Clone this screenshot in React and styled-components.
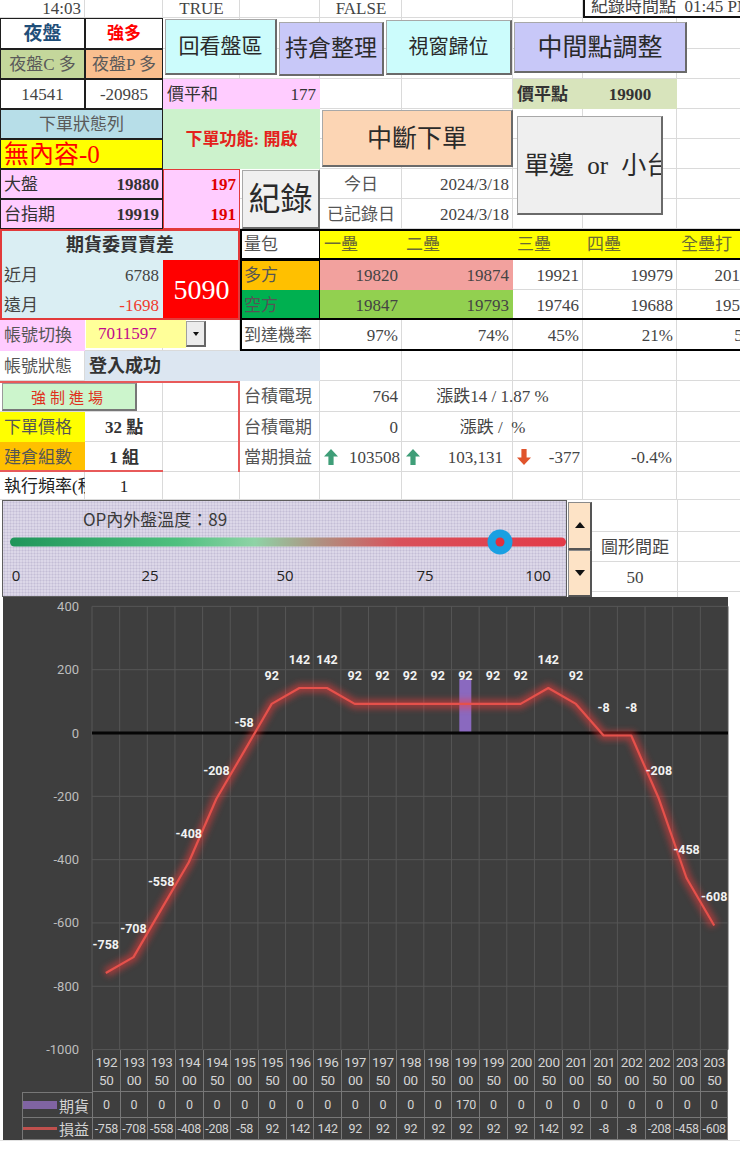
import React from 'react';
import styled, { createGlobalStyle } from 'styled-components';

// spreadsheet geometry (px)
const COLS = [85, 78, 77, 80, 82, 111, 70, 94, 84];
const ROWS = [18, 31, 30, 30, 30, 30, 30, 30, 31, 30, 30, 31, 30, 31, 30, 30, 28];

const edges = arr => arr.reduce((acc, w) => [...acc, acc[acc.length - 1] + w], [0]).slice(1);

const gridLines = (cols, rows, color) => {
  const imgs = [];
  const pos = [];
  const sizes = [];
  edges(cols).forEach(x => {
    imgs.push(`linear-gradient(${color}, ${color})`);
    pos.push(`${x - 1}px 0`);
    sizes.push('1px 100%');
  });
  edges(rows).forEach(y => {
    imgs.push(`linear-gradient(${color}, ${color})`);
    pos.push(`0 ${y - 1}px`);
    sizes.push('100% 1px');
  });
  return `
    background-image: ${imgs.join(', ')};
    background-position: ${pos.join(', ')};
    background-size: ${sizes.join(', ')};
    background-repeat: no-repeat;
  `;
};

const GlobalStyle = createGlobalStyle`
  html, body { margin: 0; padding: 0; background: #fff; }
  body {
    width: 740px;
    overflow: hidden;
    font-family: "Liberation Serif", "Noto Sans CJK TC", serif;
  }
`;

const Page = styled.div`
  width: 740px;
  overflow: hidden;
`;

const Sheet = styled.div`
  display: grid;
  grid-template-columns: ${COLS.map(c => c + 'px').join(' ')};
  grid-template-rows: ${ROWS.map(r => r + 'px').join(' ')};
  width: ${COLS.reduce((a, b) => a + b, 0)}px;
  ${gridLines(COLS, ROWS, '#dadada')}
`;

const justify = { left: 'flex-start', center: 'center', right: 'flex-end', between: 'space-between' };

const Cell = styled.div`
  grid-column: ${p => p.$c};
  grid-row: ${p => p.$r};
  display: flex;
  align-items: ${p => (p.$v === 'end' ? 'flex-end' : 'center')};
  justify-content: ${p => justify[p.$a || 'left']};
  padding: ${p => (p.$v === 'end' ? '0 4px 1px' : `0 ${p.$pr ?? 4}px 0 4px`)};
  line-height: 1;
  background: ${p => p.$bg || 'transparent'};
  color: ${p => p.$fg || '#333'};
  font-size: ${p => p.$size || 17}px;
  font-weight: ${p => (p.$bold ? 700 : 400)};
  white-space: pre;
  overflow: hidden;
  box-shadow: ${p => (p.$line ? 'inset 0 0 0 1px #1e1e1e' : 'none')};
`;

const Frame = styled.div`
  grid-column: ${p => p.$c};
  grid-row: ${p => p.$r};
  border-style: solid;
  border-color: ${p => p.$color || '#000'};
  border-width: ${p => p.$w || '2px'};
  pointer-events: none;
  z-index: 2;
`;

const StampBox = styled.div`
  grid-column: 8 / 10;
  grid-row: 1;
  display: flex;
  align-items: flex-end;
  padding: 0 0 1px 6px;
  background: #fff;
  border-left: 2px solid #111;
  border-bottom: 2px solid #111;
  color: #444;
  font-size: 17px;
  line-height: 1;
  white-space: pre;
  overflow: hidden;
  z-index: 2;
`;

const ButtonBar = styled.div`
  grid-column: 3 / 10;
  grid-row: 2 / 4;
  display: flex;
  align-items: flex-start;
  gap: 2px;
  padding-left: 2px;
  z-index: 2;
`;

const SheetButton = styled.div`
  grid-column: ${p => p.$c || 'auto'};
  grid-row: ${p => p.$r || 'auto'};
  box-sizing: border-box;
  width: ${p => (p.$w ? p.$w + 'px' : 'auto')};
  height: ${p => (p.$h ? p.$h + 'px' : 'auto')};
  margin: ${p => p.$m || '0'};
  align-self: start;
  display: flex;
  align-items: center;
  justify-content: ${p => (p.$left ? 'flex-start' : 'center')};
  padding-left: ${p => (p.$left ? '6px' : '0')};
  background: ${p => p.$bg};
  color: #2a2a2a;
  font-size: ${p => p.$size || 22}px;
  line-height: 1;
  word-spacing: ${p => (p.$left ? '7px' : 'normal')};
  white-space: nowrap;
  overflow: hidden;
  border: 1px solid #a8a8a8;
  border-right: 2px solid #6a6a6a;
  border-bottom: 2px solid #6a6a6a;
  z-index: 2;
`;

const ForceButton = styled.div`
  grid-column: 1 / 3;
  grid-row: 14;
  box-sizing: border-box;
  width: 135px;
  height: 28px;
  margin: 2px 0 0 2px;
  display: flex;
  align-items: center;
  justify-content: center;
  background: #ccf5cc;
  border: 1px solid #9a9a9a;
  border-right: 2px solid #777;
  border-bottom: 2px solid #777;
  color: #e0301c;
  font-size: 15px;
  letter-spacing: 4px;
`;

const Combo = styled.div`
  grid-column: 2 / 4;
  grid-row: 12;
  align-self: start;
  width: 120px;
  height: 28px;
  margin-left: 1px;
  display: flex;
  z-index: 2;
`;

const ComboField = styled.div`
  flex: 1;
  display: flex;
  align-items: center;
  padding-left: 12px;
  background: #ffff99;
  color: #c0088c;
  font-size: 17px;
`;

const ComboDrop = styled.div`
  width: 17px;
  margin: 1px 0;
  display: flex;
  align-items: center;
  justify-content: center;
  background: #ececec;
  border: 1px solid #a0a0a0;
  border-right: 2px solid #666;
  border-bottom: 2px solid #666;
  &::after {
    content: '';
    border-left: 3.5px solid transparent;
    border-right: 3.5px solid transparent;
    border-top: 4px solid #111;
  }
`;

const RedText = styled.span`
  color: #f03a2e;
`;

const Arrow = ({ up }) => (
  <svg width="14" height="16" viewBox="0 0 14 16">
    <path
      d={up ? 'M7 0 L14 7.5 L9.6 7.5 L9.6 16 L4.4 16 L4.4 7.5 L0 7.5 Z' : 'M7 16 L14 8.5 L9.6 8.5 L9.6 0 L4.4 0 L4.4 8.5 L0 8.5 Z'}
      fill={up ? '#3f9e78' : '#e0542c'}
    />
  </svg>
);

// ---------- slider / gauge row ----------
const SliderRow = styled.div`
  display: flex;
  height: 97px;
`;

const Gauge = styled.div`
  box-sizing: border-box;
  width: 565px;
  margin-left: 2px;
  border: 1px solid #5e5e5e;
  background-color: #dcd7e8;
  background-image: radial-gradient(#c4bdd6 0.9px, transparent 1.1px);
  background-size: 3px 3px;
  display: flex;
  flex-direction: column;
`;

const GaugeTitle = styled.div`
  margin: 8px 0 0 80px;
  height: 20px;
  font-family: "Noto Sans CJK TC", "Noto Sans", sans-serif;
  font-size: 17px;
  line-height: 20px;
  color: #3b3b3b;
`;

const Spinner = styled.div`
  width: 24px;
  margin: 2px 0 0 1px;
  display: flex;
  flex-direction: column;
`;

const SpinButton = styled.div`
  flex: 1;
  display: flex;
  align-items: center;
  justify-content: center;
  background: #fde3c6;
  border: 1px solid #8a8a8a;
  border-right: 2px solid #555;
  border-bottom: 2px solid #555;
  &::after {
    content: '';
    border-left: 5px solid transparent;
    border-right: 5px solid transparent;
    ${p => (p.$up ? 'border-bottom: 6px solid #111;' : 'border-top: 6px solid #111;')}
  }
`;

const SideGrid = styled.div`
  flex: 1;
  display: grid;
  grid-template-columns: 86px 1fr;
  grid-template-rows: 32px 30px 30px 5px;
  ${gridLines([86], [32, 30, 30], '#dadada')}
`;

// ---------- chart ----------
const ChartPanel = styled.div`
  width: 725px;
  margin-left: 3px;
  background: #3e3e3e;
  display: flex;
  flex-direction: column;
`;

const PlotSvg = styled.svg`
  display: block;
  overflow: visible;
  position: relative;
  z-index: 1;
  font-family: Roboto, "Noto Sans", sans-serif;
`;

const DataTable = styled.div`
  display: grid;
  grid-template-columns: 19px 70px repeat(23, 1fr);
  grid-template-rows: 42px 26px 22px;
  font-family: Roboto, "Noto Sans CJK TC", sans-serif;
  color: #d4d4d4;
`;

const TCell = styled.div`
  display: flex;
  flex-direction: column;
  align-items: center;
  justify-content: center;
  font-size: ${p => (p.$head ? 13.5 : 12.5)}px;
  line-height: 18px;
  letter-spacing: -0.3px;
  border-left: 1px solid #777;
  border-bottom: 1px solid #777;
  border-right: ${p => (p.$last ? '1px solid #777' : '0')};
  white-space: nowrap;
`;

const LegendCell = styled.div`
  grid-column: 2;
  display: flex;
  align-items: center;
  justify-content: flex-end;
  gap: 2px;
  padding-right: 3px;
  font-size: 15px;
  border-left: 1px solid #777;
  border-bottom: 1px solid #777;
  border-top: ${p => (p.$first ? '1px solid #777' : '0')};
`;

const Swatch = styled.span`
  display: inline-block;
  width: 34px;
  height: ${p => (p.$line ? 3 : 8)}px;
  background: ${p => p.$color};
`;

const BottomStrip = styled.div`
  height: 18px;
  border-top: 1px solid #e2e2e2;
`;

const PNL = [-758, -708, -558, -408, -208, -58, 92, 142, 142, 92, 92, 92, 92, 92, 92, 92, 142, 92, -8, -8, -208, -458, -608];
const CATS = PNL.map((_, i) => 19250 + i * 50);
const FUT = CATS.map(c => (c === 19900 ? 170 : 0));
const TICKS = [400, 200, 0, -200, -400, -600, -800, -1000];

const PX = 89;
const PW = 636;
const CW = PW / 23;
const yv = v => 136 - v * 0.31657;
const cx = i => PX + (i + 0.5) * CW;

function PnlChart() {
  const pts = PNL.map((v, i) => `${cx(i).toFixed(1)},${yv(v).toFixed(1)}`).join(' ');
  return (
    <PlotSvg width="725" height="453" viewBox="0 0 725 453">
      <defs>
        <filter id="glow" filterUnits="userSpaceOnUse" x="0" y="0" width="725" height="453">
          <feGaussianBlur stdDeviation="3" />
        </filter>
      </defs>
      {TICKS.map(v => (
        <line key={'h' + v} x1={PX} x2={PX + PW} y1={yv(v)} y2={yv(v)} stroke="#565656" strokeWidth="1" />
      ))}
      {Array.from({ length: 24 }, (_, i) => (
        <line key={'v' + i} x1={PX + i * CW} x2={PX + i * CW} y1={yv(400)} y2={yv(-1000)} stroke="#565656" strokeWidth="1" />
      ))}
      {TICKS.map(v => (
        <text key={'t' + v} x="76" y={yv(v) + 4.5} textAnchor="end" fill="#bdbdbd" fontSize="13">
          {v}
        </text>
      ))}
      {FUT.map((v, i) =>
        v ? <rect key={'b' + i} x={cx(i) - 6} y={yv(v)} width="12" height={v * 0.31657} fill="#8a69bf" /> : null
      )}
      <line x1={PX} x2={PX + PW} y1={yv(0)} y2={yv(0)} stroke="#050505" strokeWidth="3" />
      <polyline points={pts} fill="none" stroke="#ff3a3a" strokeWidth="9" opacity="0.5" filter="url(#glow)" />
      <polyline points={pts} fill="none" stroke="#e5514b" strokeWidth="2.2" strokeLinejoin="round" />
      {PNL.map((v, i) => (
        <text
          key={'l' + i}
          x={cx(i)}
          y={yv(v) - 24}
          textAnchor="middle"
          fill="#f2f2f2"
          fontSize="12.5"
          fontWeight="700"
        >
          {v}
        </text>
      ))}
    </PlotSvg>
  );
}

function ChartTable() {
  return (
    <DataTable>
      <div style={{ gridColumn: '1 / 3' }} />
      {CATS.map((c, i) => (
        <TCell key={'c' + c} $head $last={i === 22}>
          <span>{String(c).slice(0, 3)}</span>
          <span>{String(c).slice(3)}</span>
        </TCell>
      ))}
      <div />
      <LegendCell $first>
        <Swatch $color="#8064a2" />
        期貨
      </LegendCell>
      {FUT.map((v, i) => (
        <TCell key={'f' + i} $last={i === 22}>{v}</TCell>
      ))}
      <div />
      <LegendCell>
        <Swatch $line $color="#c0504d" />
        損益
      </LegendCell>
      {PNL.map((v, i) => (
        <TCell key={'p' + i} $last={i === 22}>{v}</TCell>
      ))}
    </DataTable>
  );
}

function TempGauge() {
  const ticks = [
    ['0', 13],
    ['25', 147],
    ['50', 282],
    ['75', 422],
    ['100', 535],
  ];
  return (
    <svg width="563" height="67" viewBox="0 0 563 67" style={{ display: 'block' }}>
      <defs>
        <linearGradient id="heat" x1="0" x2="1" y1="0" y2="0">
          <stop offset="0" stopColor="#1f955a" />
          <stop offset="0.3" stopColor="#4fc07f" />
          <stop offset="0.44" stopColor="#8ed3a6" />
          <stop offset="0.56" stopColor="#b08f80" />
          <stop offset="0.7" stopColor="#d9505a" />
          <stop offset="1" stopColor="#e33a48" />
        </linearGradient>
      </defs>
      <rect x="7" y="8.5" width="556" height="9" rx="4.5" fill="url(#heat)" />
      <circle cx="497" cy="13" r="12.5" fill="#1aa0e2" />
      <circle cx="497" cy="13" r="4.5" fill="#e2303e" />
      {ticks.map(([t, x]) => (
        <text key={t} x={x} y="52" textAnchor="middle" fontSize="15" fill="#222" fontFamily="'Open Sans', sans-serif">
          {t}
        </text>
      ))}
    </svg>
  );
}

const BASES = ['一壘', '二壘', '三壘', '四壘', '全壘打'];
const LONG = ['19820', '19874', '19921', '19979', '20137'];
const SHORT = ['19847', '19793', '19746', '19688', '19529'];
const PROB = ['97%', '74%', '45%', '21%', '5%'];

export default function App() {
  return (
    <Page>
      <GlobalStyle />
      <Sheet>
        {/* row 1 */}
        <Cell $c="1" $r="1" $a="right" $v="end" $fg="#444">14:03</Cell>
        <Cell $c="3" $r="1" $a="center" $v="end" $fg="#444">TRUE</Cell>
        <Cell $c="5" $r="1" $a="center" $v="end" $fg="#444">FALSE</Cell>
        <StampBox>紀錄時間點  01:45 PM</StampBox>

        {/* night session block */}
        <Cell $c="1" $r="2" $a="center" $fg="#1f4e79" $bold $size={19} $line>夜盤</Cell>
        <Cell $c="2" $r="2" $a="center" $fg="#ff0000" $bold $line>強多</Cell>
        <Cell $c="1" $r="3" $a="center" $bg="#c4d79b" $fg="#5a5a5a" $line>夜盤C 多</Cell>
        <Cell $c="2" $r="3" $a="center" $bg="#fabf8f" $fg="#5a5a5a" $line>夜盤P 多</Cell>
        <Cell $c="1" $r="4" $a="center" $line $fg="#444">14541</Cell>
        <Cell $c="2" $r="4" $a="center" $line $fg="#444">-20985</Cell>

        <ButtonBar>
          <SheetButton $bg="#ccfcfc" $w={112} $h={56} $m="1px 0 0 0" $size={21}>回看盤區</SheetButton>
          <SheetButton $bg="#c8c8f8" $w={105} $h={54} $m="4px 0 0 0" $size={23}>持倉整理</SheetButton>
          <SheetButton $bg="#ccfcfc" $w={126} $h={55} $m="2px 0 0 0" $size={20}>視窗歸位</SheetButton>
          <SheetButton $bg="#c8c8f8" $w={173} $h={51} $m="4px 0 0 0" $size={25}>中間點調整</SheetButton>
        </ButtonBar>

        <Cell $c="3 / 5" $r="4" $a="between" $bg="#ffccff">
          <span>價平和</span>
          <span>177</span>
        </Cell>
        <Cell $c="7" $r="4" $bg="#d8e4bc" $bold>價平點</Cell>
        <Cell $c="8" $r="4" $bg="#d8e4bc" $bold $a="center">19900</Cell>

        {/* order status */}
        <Cell $c="1 / 3" $r="5" $a="center" $bg="#b7dee8" $fg="#5a5a5a" $line>下單狀態列</Cell>
        <Cell $c="1 / 3" $r="6" $bg="#ffff00" $fg="#ff0000" $size={25} $line>無內容-0</Cell>
        <Cell $c="3 / 5" $r="5 / 7" $a="center" $bg="#ccf2cc" $fg="#e4221c" $bold>下單功能: 開啟</Cell>
        <SheetButton $c="5 / 7" $r="5 / 7" $bg="#fcd5b4" $h={57} $m="1px 0 0 2px" $size={25}>中斷下單</SheetButton>
        <SheetButton $c="7 / 9" $r="5 / 9" $bg="#efefef" $w={146} $h={99} $m="7px 0 0 4px" $size={25} $left>
          單邊 or 小台
        </SheetButton>

        {/* index block */}
        <Cell $c="1 / 3" $r="7" $a="between" $bg="#ffccff" $line>
          <span>大盤</span>
          <b>19880</b>
        </Cell>
        <Cell $c="1 / 3" $r="8" $a="between" $bg="#ffccff" $line>
          <span>台指期</span>
          <b>19919</b>
        </Cell>
        <Cell $c="3" $r="7" $a="right" $bg="#ffccff" $fg="#e00000" $bold>197</Cell>
        <Cell $c="3" $r="8" $a="right" $bg="#ffccff" $fg="#e00000" $bold>191</Cell>
        <Frame $c="3" $r="7 / 9" $w="1.5px" $color="#e23a3a" />
        <SheetButton $c="4" $r="7 / 9" $bg="#f0f0f0" $h={59} $m="1px 0 0 2px" $size={32}>紀錄</SheetButton>
        <Cell $c="5" $r="7" $a="center" $fg="#555">今日</Cell>
        <Cell $c="6" $r="7" $a="right" $fg="#444">2024/3/18</Cell>
        <Cell $c="5" $r="8" $a="center" $fg="#555">已記錄日</Cell>
        <Cell $c="6" $r="8" $a="right" $fg="#444">2024/3/18</Cell>

        {/* bid/ask spread */}
        <Cell $c="1 / 4" $r="9" $a="center" $bg="#daeef3" $bold $size={18}>期貨委買賣差</Cell>
        <Cell $c="1 / 3" $r="10" $a="between" $bg="#daeef3" $fg="#444">
          <span>近月</span>
          <span>6788</span>
        </Cell>
        <Cell $c="1 / 3" $r="11" $a="between" $bg="#daeef3" $fg="#444">
          <span>遠月</span>
          <RedText>-1698</RedText>
        </Cell>
        <Cell $c="3" $r="10 / 12" $a="center" $bg="#ff0000" $fg="#fff" $size={28}>5090</Cell>
        <Frame $c="1 / 4" $r="9 / 12" $w="2px" $color="#e23a3a" />

        {/* bases table */}
        <Cell $c="4" $r="9" $fg="#555">量包</Cell>
        {BASES.map((b, i) => (
          <Cell key={b} $c={String(5 + i)} $r="9" $bg="#ffff00" $fg="#6a6a35">{b}</Cell>
        ))}
        <Cell $c="4" $r="10" $bg="#ffc000" $fg="#555">多方</Cell>
        {LONG.map((v, i) => (
          <Cell key={'L' + i} $c={String(5 + i)} $r="10" $a="right" $fg="#444" $bg={i < 2 ? '#f2a19e' : undefined}>{v}</Cell>
        ))}
        <Cell $c="4" $r="11" $bg="#00b050" $fg="#555">空方</Cell>
        {SHORT.map((v, i) => (
          <Cell key={'S' + i} $c={String(5 + i)} $r="11" $a="right" $fg="#444" $bg={i < 2 ? '#92d050' : undefined}>{v}</Cell>
        ))}
        <Cell $c="4" $r="12" $fg="#555">到達機率</Cell>
        {PROB.map((v, i) => (
          <Cell key={'P' + i} $c={String(5 + i)} $r="12" $a="right" $fg="#444">{v}</Cell>
        ))}
        <Frame $c="4 / 10" $r="9 / 13" $w="2px" />
        <Frame $c="4 / 10" $r="9" $w="0 0 2px 0" />
        <Frame $c="4 / 10" $r="11" $w="0 0 2px 0" />
        <Frame $c="4" $r="9 / 12" $w="0 1.5px 0 0" />
        <Frame $c="4" $r="10 / 12" $w="1px 0 0 0" />

        {/* account */}
        <Cell $c="1" $r="12" $bg="#ffccff" $fg="#555">帳號切換</Cell>
        <Combo>
          <ComboField>7011597</ComboField>
          <ComboDrop />
        </Combo>
        <Cell $c="1" $r="13" $fg="#555">帳號狀態</Cell>
        <Cell $c="2 / 5" $r="13" $bg="#dce6f1" $bold $size={18}>登入成功</Cell>

        {/* order settings */}
        <ForceButton>強制進場</ForceButton>
        <Cell $c="1" $r="15" $bg="#ffff00" $fg="#555">下單價格</Cell>
        <Cell $c="2" $r="15" $a="center" $bold>32 點</Cell>
        <Cell $c="1" $r="16" $bg="#ffc000" $fg="#555">建倉組數</Cell>
        <Cell $c="2" $r="16" $a="center" $bold>1 組</Cell>
        <Frame $c="1 / 4" $r="14 / 17" $w="2px 2px 0 0" $color="#e85a5a" />
        <Frame $c="1 / 3" $r="16" $w="0 0 2px 0" $color="#e85a5a" />
        <Cell $c="1" $r="17" $fg="#222">執行頻率(秒)</Cell>
        <Cell $c="2" $r="17" $a="center" $fg="#222">1</Cell>

        {/* TSMC */}
        <Cell $c="4" $r="14" $fg="#555">台積電現</Cell>
        <Cell $c="5" $r="14" $a="right" $fg="#444">764</Cell>
        <Cell $c="6 / 8" $r="14" $a="center" $fg="#444">漲跌14 / 1.87 %</Cell>
        <Cell $c="4" $r="15" $fg="#555">台積電期</Cell>
        <Cell $c="5" $r="15" $a="right" $fg="#444">0</Cell>
        <Cell $c="6 / 8" $r="15" $a="center" $fg="#444">漲跌 /  %</Cell>
        <Cell $c="4" $r="16" $fg="#555">當期損益</Cell>
        <Cell $c="5" $r="16" $a="between" $fg="#444" $pr={2}>
          <Arrow up />
          <span>103508</span>
        </Cell>
        <Cell $c="6" $r="16" $a="between" $fg="#444" $pr={10}>
          <Arrow up />
          <span>103,131</span>
        </Cell>
        <Cell $c="7" $r="16" $a="between" $fg="#444" $pr={3}>
          <Arrow />
          <span>-377</span>
        </Cell>
        <Cell $c="8" $r="16" $a="right" $fg="#444" $pr={5}>-0.4%</Cell>
      </Sheet>

      <SliderRow>
        <Gauge>
          <GaugeTitle>OP內外盤溫度：89</GaugeTitle>
          <TempGauge />
        </Gauge>
        <Spinner>
          <SpinButton $up />
          <SpinButton />
        </Spinner>
        <SideGrid>
          <Cell $c="1" $r="2" $a="center" $fg="#444">圖形間距</Cell>
          <Cell $c="1" $r="3" $a="center" $fg="#444">50</Cell>
        </SideGrid>
      </SliderRow>

      <ChartPanel>
        <PnlChart />
        <ChartTable />
      </ChartPanel>
      <BottomStrip />
    </Page>
  );
}
